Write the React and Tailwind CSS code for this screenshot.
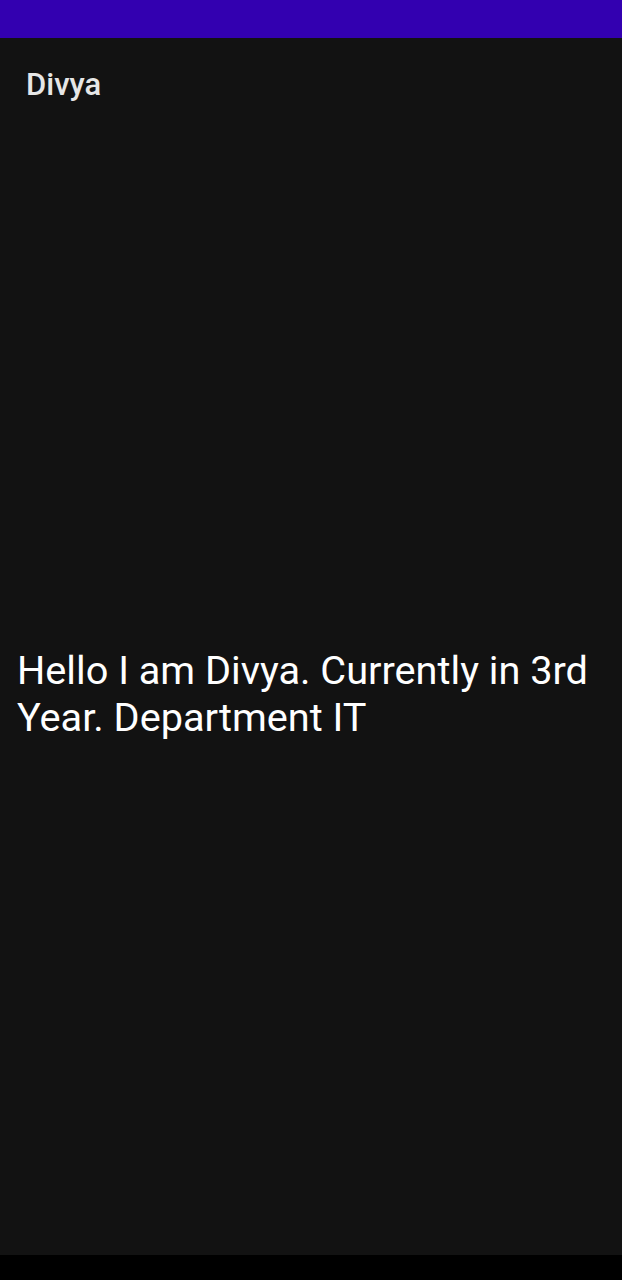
export default function App() {
  return (
    <div className="w-[622px] h-[1280px] flex flex-col bg-[#121212]" style={{ fontFamily: "Roboto, 'Noto Sans', sans-serif" }}>
      <div className="h-[38px] bg-[#3300b0] shrink-0" />
      <div className="flex-1 flex flex-col">
        <div className="h-[90px] flex items-center px-[26px] pt-[2px]">
          <span className="text-[31px] font-medium text-[#e6e6e6] leading-none">Divya</span>
        </div>
        <div className="flex-1 flex items-center px-[17px] pt-[4px]">
          <p className="text-[39.7px] leading-[47px] text-white">Hello I am Divya. Currently in 3rd Year. Department IT</p>
        </div>
      </div>
      <div className="h-[25px] bg-black shrink-0" />
    </div>
  );
}
